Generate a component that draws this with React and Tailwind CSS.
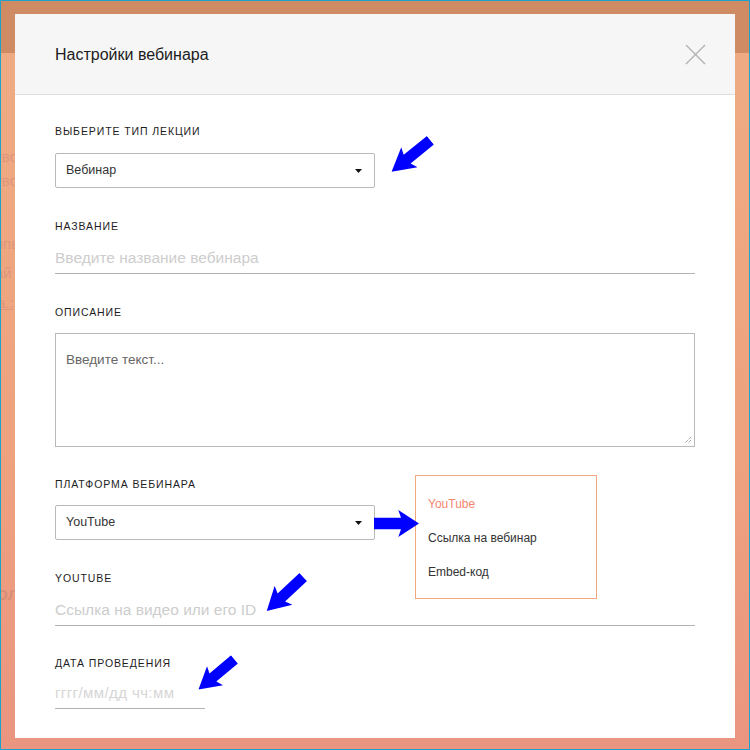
import React from "react";

const font = { fontFamily: '"Liberation Sans", Arial, sans-serif' };

function Arrow({ className, w = 50, h = 26 }) {
  return (
    <svg
      width={w}
      height={h}
      viewBox="0 0 50 26"
      preserveAspectRatio="none"
      className={"absolute " + className}
    >
      <polygon points="0,7.5 30,7.5 27,0 50,13 27,26 30,18.5 0,18.5" fill="#0000ff" />
    </svg>
  );
}

function Caret() {
  return (
    <svg width="7" height="4" viewBox="0 0 7 4" className="shrink-0">
      <polygon points="0,0 7,0 3.5,4" fill="#111" />
    </svg>
  );
}

function Label({ children }) {
  return (
    <div className="text-[10.5px] leading-[14px] tracking-[0.9px] uppercase text-[#1d1d1d]">
      {children}
    </div>
  );
}

function SelectBox({ value }) {
  return (
    <div className="w-[320px] h-[35px] border border-[#b9b9b9] rounded-[2px] flex items-center justify-between pl-[10px] pr-[12px] text-[12.5px] text-[#333]">
      <span>{value}</span>
      <Caret />
    </div>
  );
}

function LineInput({ placeholder, className = "", textClass = "text-[15px]" }) {
  return (
    <div className={"border-b border-[#b3b3b3] flex items-center " + className}>
      <span className={textClass + " text-[#cdcdcd]"}>{placeholder}</span>
    </div>
  );
}

export default function App() {
  return (
    <div
      className="relative w-[750px] h-[750px] overflow-hidden border border-[#1ba3cc] bg-[linear-gradient(to_bottom,#cf8b64_0px,#cf8b64_52px,#eeab83_52px,#eea27f_60%,#ea9580_100%)]"
      style={font}
    >
      {/* page content peeking out behind the overlay */}
      <div className="absolute left-0 top-[148px] w-[14px] overflow-hidden text-[15px] text-[#dd977c] leading-none whitespace-nowrap">
        <div className="-ml-[6px]">тво</div>
        <div className="-ml-[6px] mt-[9px]">тво</div>
        <div className="-ml-[6px] mt-[48px]">ппь</div>
        <div className="-ml-[6px] mt-[14px]">ай</div>
        <div className="-ml-[4px] mt-[15px] underline">а.:</div>
        <div className="-ml-[4px] mt-[275px] text-[18px] font-bold text-[#d88f78]">ол</div>
      </div>

      {/* modal */}
      <div className="absolute left-[14px] top-[13px] w-[720px] h-[724px] bg-white">
        <div className="h-[81px] bg-[#f6f6f6] border-b border-[#dddddd] flex items-center justify-between pl-[40px] pr-[29px]">
          <h2 className="text-[16px] text-[#1c1c1c] mt-[1px]">Настройки вебинара</h2>
          <svg width="21" height="21" viewBox="0 0 21 21">
            <path d="M1 1L20 20M20 1L1 20" stroke="#b0b0b0" strokeWidth="1.3" fill="none" />
          </svg>
        </div>

        <div className="pl-[40px] pr-[40px] pt-[29px] flex flex-col">
          <Label>Выберите тип лекции</Label>
          <div className="mt-[15px]">
            <SelectBox value="Вебинар" />
          </div>

          <div className="mt-[31px]">
            <Label>Название</Label>
          </div>
          <LineInput placeholder="Введите название вебинара" className="mt-[10px] h-[31px]" textClass="text-[15.5px]" />

          <div className="mt-[31px]">
            <Label>Описание</Label>
          </div>
          <div className="mt-[14px] h-[114px] border border-[#b9b9b9] relative px-[10px] pt-[13px]">
            <span className="text-[13.5px] text-[#666]">Введите текст...</span>
            <svg width="8" height="8" viewBox="0 0 8 8" className="absolute right-[2px] bottom-[2px]">
              <path d="M7 1L1 7M7 4L4 7" stroke="#777" strokeWidth="1" strokeDasharray="1 1" />
            </svg>
          </div>

          <div className="mt-[30px]">
            <Label>Платформа вебинара</Label>
          </div>
          <div className="mt-[14px]">
            <SelectBox value="YouTube" />
          </div>

          <div className="mt-[31px]">
            <Label>YouTube</Label>
          </div>
          <LineInput placeholder="Ссылка на видео или его ID" className="mt-[9px] h-[32px]" textClass="text-[15.5px]" />

          <div className="mt-[30px]">
            <Label>Дата проведения</Label>
          </div>
          <LineInput placeholder="гггг/мм/дд чч:мм" className="mt-[9px] h-[30px] w-[150px]" textClass="text-[15px] tracking-[0.4px] text-[#d6d6d6]" />
        </div>

        {/* open dropdown */}
        <div className="absolute left-[400px] top-[461px] w-[182px] h-[124px] border border-[#f0a97f] bg-white pt-[11px] text-[12px]">
          <div className="h-[34px] flex items-center pl-[12px] text-[#f4866f]">YouTube</div>
          <div className="h-[34px] flex items-center pl-[12px] text-[#333]">Ссылка на вебинар</div>
          <div className="h-[34px] flex items-center pl-[12px] text-[#333]">Embed-код</div>
        </div>
      </div>

      {/* annotation arrows */}
      <Arrow className="left-[385px] top-[142px] rotate-[141deg]" />
      <Arrow className="left-[373px] top-[509px]" w={45} h={27} />
      <Arrow className="left-[259px] top-[580px] rotate-[137deg]" />
      <Arrow className="left-[192px] top-[661px] rotate-[140deg]" w={47} h={25} />
    </div>
  );
}
